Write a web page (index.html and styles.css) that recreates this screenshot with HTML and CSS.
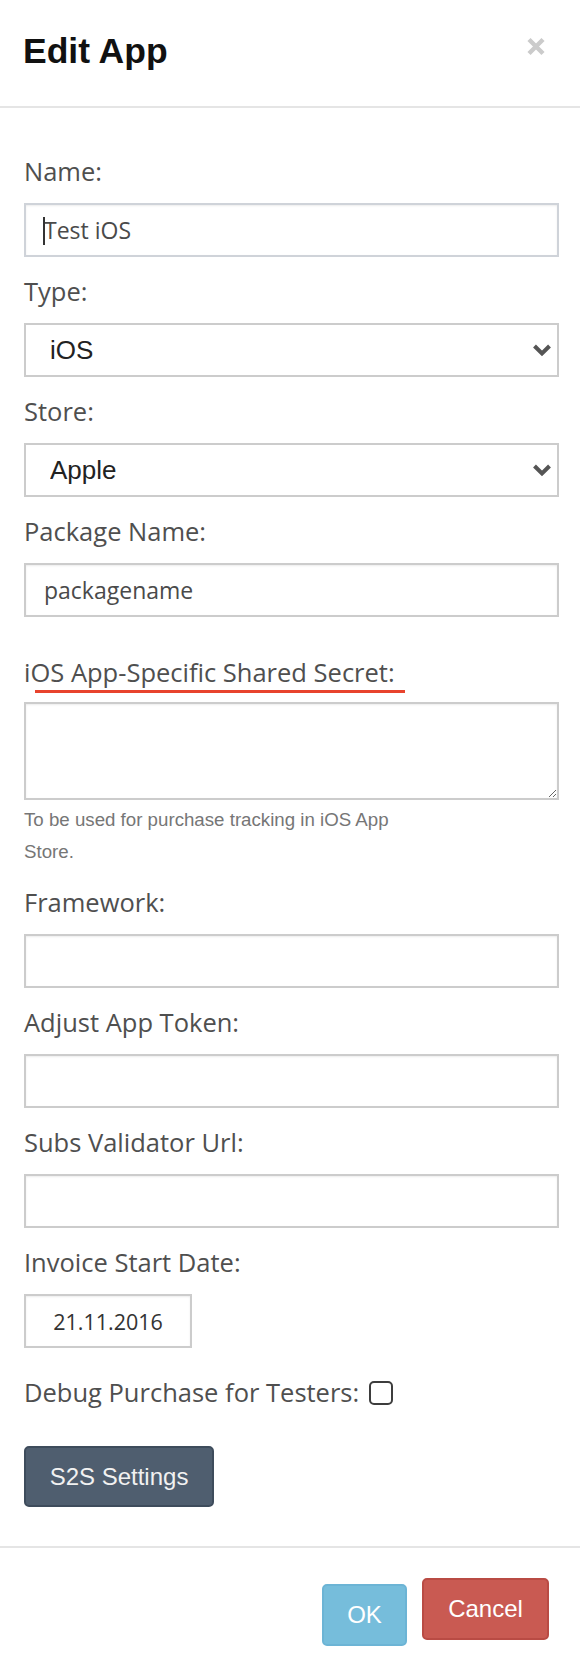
FILE: index.html
```html
<!DOCTYPE html>
<html lang="en">
<head>
<meta charset="utf-8">
<title>Edit App</title>
<link rel="stylesheet" href="styles.css">
</head>
<body>
<div class="modal">
  <header class="modal-header">
    <h1 class="modal-title">Edit App</h1>
    <button class="close" type="button" aria-label="Close">
      <svg width="20" height="19" viewBox="0 0 20 19"><path d="M3 2.5 L17 16.5 M17 2.5 L3 16.5" stroke="#cbcbcb" stroke-width="4.4" fill="none"/></svg>
    </button>
  </header>

  <form class="modal-body">
    <div class="group">
      <label class="label">Name:</label>
      <div class="field">
        <input class="control control-focus" type="text" value="Test iOS">
        <span class="caret"></span>
      </div>
    </div>

    <div class="group">
      <label class="label">Type:</label>
      <div class="field">
        <select class="control select"><option>iOS</option></select>
        <svg class="chevron" width="20" height="13" viewBox="0 0 20 13"><polyline points="2.5,2.5 10,10 17.5,2.5" stroke="#555" stroke-width="4" fill="none"/></svg>
      </div>
    </div>

    <div class="group">
      <label class="label">Store:</label>
      <div class="field">
        <select class="control select"><option>Apple</option></select>
        <svg class="chevron" width="20" height="13" viewBox="0 0 20 13"><polyline points="2.5,2.5 10,10 17.5,2.5" stroke="#555" stroke-width="4" fill="none"/></svg>
      </div>
    </div>

    <div class="group">
      <label class="label">Package Name:</label>
      <input class="control" type="text" value="packagename">
    </div>

    <div class="group group-secret">
      <label class="label label-marked">iOS App-Specific Shared Secret:</label>
      <textarea class="control textarea"></textarea>
      <p class="help">To be used for purchase tracking in iOS App Store.</p>
    </div>

    <div class="group">
      <label class="label">Framework:</label>
      <input class="control" type="text">
    </div>

    <div class="group">
      <label class="label">Adjust App Token:</label>
      <input class="control" type="text">
    </div>

    <div class="group">
      <label class="label">Subs Validator Url:</label>
      <input class="control" type="text">
    </div>

    <div class="group">
      <label class="label">Invoice Start Date:</label>
      <input class="control control-date" type="text" value="21.11.2016">
    </div>

    <div class="check-row">
      <label class="label">Debug Purchase for Testers:</label>
      <input class="checkbox" type="checkbox">
    </div>

    <button class="btn btn-dark" type="button">S2S Settings</button>
  </form>

  <footer class="modal-footer">
    <button class="btn btn-ok" type="button">OK</button>
    <button class="btn btn-cancel" type="button">Cancel</button>
  </footer>
</div>
</body>
</html>
```

FILE: styles.css
```css
* { box-sizing: border-box; }

html, body {
  margin: 0;
  padding: 0;
  background: #fff;
}

body {
  width: 580px;
  font-family: "Open Sans", "Noto Sans", sans-serif;
}

.modal {
  width: 580px;
}

.modal-header {
  display: flex;
  justify-content: space-between;
  align-items: flex-start;
  height: 108px;
  padding: 31px 34px 0 23px;
  border-bottom: 2px solid #e5e5e5;
}

.modal-title {
  margin: 0;
  font-family: "Liberation Sans", Arial, sans-serif;
  font-weight: bold;
  font-size: 35.5px;
  line-height: 40px;
  color: #111;
}

.close {
  margin-top: 6px;
  padding: 0;
  border: 0;
  background: transparent;
  line-height: 0;
}

.modal-body {
  display: flex;
  flex-direction: column;
  align-items: flex-start;
  padding: 48px 21px 39px 24px;
}

.group {
  display: flex;
  flex-direction: column;
  width: 100%;
  margin-bottom: 19px;
}

.label {
  display: block;
  font-size: 25.5px;
  line-height: 30px;
  color: #4f4f4f;
  margin-bottom: 17px;
}

.field {
  position: relative;
  width: 100%;
}

.control {
  display: block;
  width: 100%;
  height: 54px;
  margin: 0;
  padding: 0 16px 0 18px;
  border: 2px solid #cccccc;
  border-radius: 0;
  background: #fff;
  box-shadow: inset 0 1px 2px rgba(0, 0, 0, 0.08);
  font-family: "Open Sans", "Noto Sans", sans-serif;
  font-size: 23px;
  color: #4a4a4a;
  outline: none;
}

.control-focus {
  border-color: #cfd3d9;
}

.caret {
  position: absolute;
  left: 19px;
  top: 14px;
  width: 2px;
  height: 28px;
  background: #333;
}

.select {
  -webkit-appearance: none;
  appearance: none;
  padding-left: 24px;
  font-family: "Liberation Sans", Arial, sans-serif;
  font-size: 26px;
  color: #222;
  box-shadow: none;
}

.chevron {
  position: absolute;
  right: 7px;
  top: 50%;
  transform: translateY(-50%);
  pointer-events: none;
}

.group-secret {
  margin-top: 21px;
}

.label-marked {
  position: relative;
  margin-bottom: 15px;
}

.label-marked::after {
  content: "";
  position: absolute;
  left: 11px;
  top: 33px;
  width: 370px;
  height: 3px;
  background: #e8432d;
}

.textarea {
  height: 98px;
  resize: both;
  padding: 8px 18px;
}

.help {
  max-width: 410px;
  margin: 4px 0 0;
  font-family: "Liberation Sans", Arial, sans-serif;
  font-size: 18.7px;
  line-height: 32px;
  color: #767676;
}

.control-date {
  width: 168px;
  text-align: center;
  padding: 0 8px;
  font-size: 21.5px;
  color: #333;
}

.check-row {
  display: flex;
  align-items: flex-start;
  gap: 10px;
  margin-top: 10px;
}

.check-row .label {
  margin-bottom: 0;
}

.checkbox {
  -webkit-appearance: none;
  appearance: none;
  width: 24px;
  height: 24px;
  margin: 4px 0 0;
  border: 2px solid #3d3d3d;
  border-radius: 5px;
  background: #fff;
}

.btn {
  font-family: "Liberation Sans", Arial, sans-serif;
  font-size: 24px;
  color: #fff;
  border-radius: 5px;
  cursor: pointer;
}

.btn-dark {
  margin-top: 39px;
  width: 190px;
  height: 61px;
  background: #4f5e6f;
  border: 2px solid #3e4c5c;
  color: #f1f1f1;
}

.modal-footer {
  display: flex;
  justify-content: flex-end;
  align-items: flex-start;
  gap: 15px;
  height: 122px;
  padding: 30px 31px 0 0;
  border-top: 2px solid #e5e5e5;
}

.btn-ok {
  margin-top: 6px;
  width: 85px;
  height: 62px;
  background: #76bddb;
  border: 2px solid #6cb4d5;
}

.btn-cancel {
  width: 127px;
  height: 62px;
  background: #c95a52;
  border: 2px solid #b94b44;
}
```
